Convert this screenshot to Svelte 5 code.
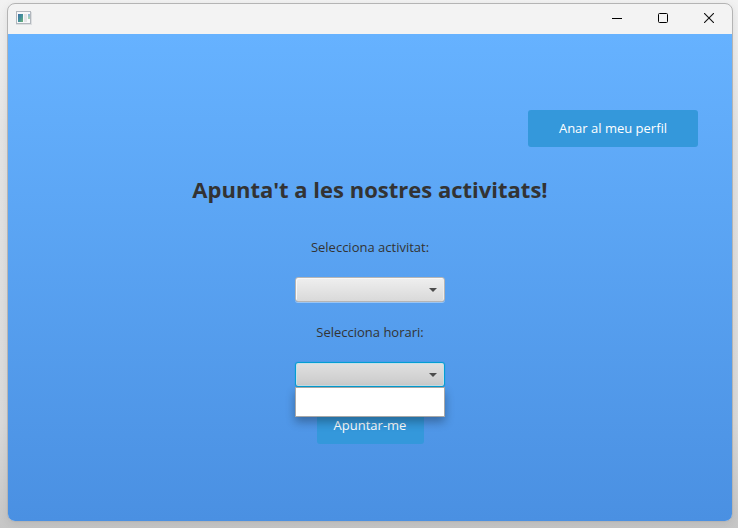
<script>
  let activitat = $state('');
  let horari = $state('');
</script>

<div class="desktop">
  <div class="window">
    <header class="titlebar">
      <svg class="app-icon" width="16" height="14" viewBox="0 0 16 14" aria-hidden="true">
        <defs>
          <linearGradient id="thumb" x1="0" y1="0" x2="1" y2="1">
            <stop offset="0" stop-color="#3f6fa5" />
            <stop offset="0.5" stop-color="#43909a" />
            <stop offset="1" stop-color="#6fb276" />
          </linearGradient>
          <linearGradient id="side" x1="0" y1="0" x2="0" y2="1">
            <stop offset="0" stop-color="#8fb4dd" />
            <stop offset="1" stop-color="#a9d8ae" />
          </linearGradient>
        </defs>
        <rect x="0.5" y="0.5" width="14" height="12" fill="#f8f8fa" stroke="#b2b7bd" />
        <path d="M0 13.5h16M15.5 1v12" stroke="#dcdee0" />
        <rect x="2" y="3" width="5" height="8" fill="url(#thumb)" />
        <rect x="8" y="3" width="3" height="8" fill="#e4e5e7" />
        <rect x="12" y="3" width="2" height="5" fill="url(#side)" />
      </svg>
      <div class="controls">
        <button type="button" aria-label="Minimitza">
          <svg width="10" height="10" viewBox="0 0 10 10"><path d="M0 5.5h10" stroke="#000" /></svg>
        </button>
        <button type="button" aria-label="Maximitza">
          <svg width="10" height="10" viewBox="0 0 10 10"><rect x="0.5" y="0.5" width="9" height="9" rx="1" fill="none" stroke="#000" /></svg>
        </button>
        <button type="button" aria-label="Tanca">
          <svg width="10" height="10" viewBox="0 0 10 10"><path d="M0 0l10 10M10 0L0 10" stroke="#111" stroke-width="1.1" /></svg>
        </button>
      </div>
    </header>

    <main>
      <div class="top">
        <button type="button" class="primary profile">Anar al meu perfil</button>
      </div>
      <h1>Apunta't a les nostres activitats!</h1>
      <form onsubmit={(e) => e.preventDefault()}>
        <label for="activitat">Selecciona activitat:</label>
        <div class="combo">
          <select id="activitat" bind:value={activitat}><option value=""></option></select>
          <svg class="arrow" width="8" height="4" viewBox="0 0 8 4" aria-hidden="true"><path d="M0 0h8L4 4z" fill="#4c4c4c" /></svg>
        </div>
        <label for="horari">Selecciona horari:</label>
        <div class="combo open">
          <select id="horari" bind:value={horari}><option value=""></option></select>
          <svg class="arrow" width="8" height="4" viewBox="0 0 8 4" aria-hidden="true"><path d="M0 0h8L4 4z" fill="#4c4c4c" /></svg>
          <div class="popup"></div>
        </div>
        <button type="submit" class="primary">Apuntar-me</button>
      </form>
    </main>
  </div>
</div>

<style>
  :global(body) {
    margin: 0;
  }
  .desktop {
    box-sizing: border-box;
    min-height: 100vh;
    padding: 3px 5px 6px 7px;
    display: flex;
    overflow: hidden;
    background: linear-gradient(#f2f2f2, #e4e4e4 25%, #dadada 80%, #c6c6c6);
    font-family: "Segoe UI", "Open Sans", "Noto Sans", sans-serif;
    font-size: 13px;
    line-height: 20px;
    color: #333;
  }
  .window {
    flex: 1;
    display: flex;
    flex-direction: column;
    border: 1px solid #b4b4b4;
    border-radius: 8px;
    overflow: hidden;
    background: #f3f3f3;
    box-shadow: 0 2px 8px rgba(0, 0, 0, 0.08);
  }
  .titlebar {
    display: flex;
    align-items: center;
    justify-content: space-between;
    height: 30px;
    padding-left: 8px;
  }
  .app-icon {
    display: block;
    margin-bottom: 2px;
  }
  .controls {
    display: flex;
    height: 100%;
  }
  .controls button {
    display: flex;
    align-items: center;
    justify-content: center;
    width: 46px;
    padding: 0 0 2px;
    border: 0;
    background: none;
  }
  main {
    flex: 1;
    display: flex;
    flex-direction: column;
    align-items: center;
    padding: 76px 34px 20px;
    background: linear-gradient(#66b2ff, #4a90e2);
  }
  .top {
    align-self: stretch;
    display: flex;
    justify-content: flex-end;
  }
  .primary {
    height: 37px;
    padding: 0 16px 2px;
    border: 0;
    border-radius: 3px;
    background: #3498db;
    color: #fff;
    font: inherit;
  }
  .profile {
    padding: 0 30px 2px;
    min-width: 170px;
  }
  h1 {
    margin: 26px 0 32px;
    font-size: 22px;
    line-height: 32px;
    font-weight: 700;
  }
  form {
    display: flex;
    flex-direction: column;
    align-items: center;
    gap: 20px;
  }
  form .primary {
    min-width: 107px;
  }
  .combo {
    position: relative;
    width: 150px;
    height: 25px;
  }
  select {
    appearance: none;
    display: block;
    box-sizing: border-box;
    width: 100%;
    height: 100%;
    border: 1px solid #b5b5b5;
    border-radius: 3px;
    background: linear-gradient(#efefef, #d9d9d9);
    box-shadow: inset 1px 1px 0 #f8f8f8, inset -1px 0 0 #ececec, 0 1px 0 rgba(255, 255, 255, 0.4);
    font: inherit;
    outline: none;
  }
  .open select {
    border-color: #039ed3;
    background: linear-gradient(#e0e0e0, #cacaca);
    box-shadow: inset 0 0 0 1px #c5dfe8, 0 0 1px #039ed3;
  }
  .arrow {
    position: absolute;
    right: 8px;
    top: 11px;
    pointer-events: none;
  }
  .popup {
    position: absolute;
    top: 100%;
    left: 0;
    box-sizing: border-box;
    width: 100%;
    height: 30px;
    border: 1px solid #a8a8a8;
    background: #fff;
    box-shadow: 0 5px 10px rgba(0, 0, 0, 0.3);
  }
</style>
